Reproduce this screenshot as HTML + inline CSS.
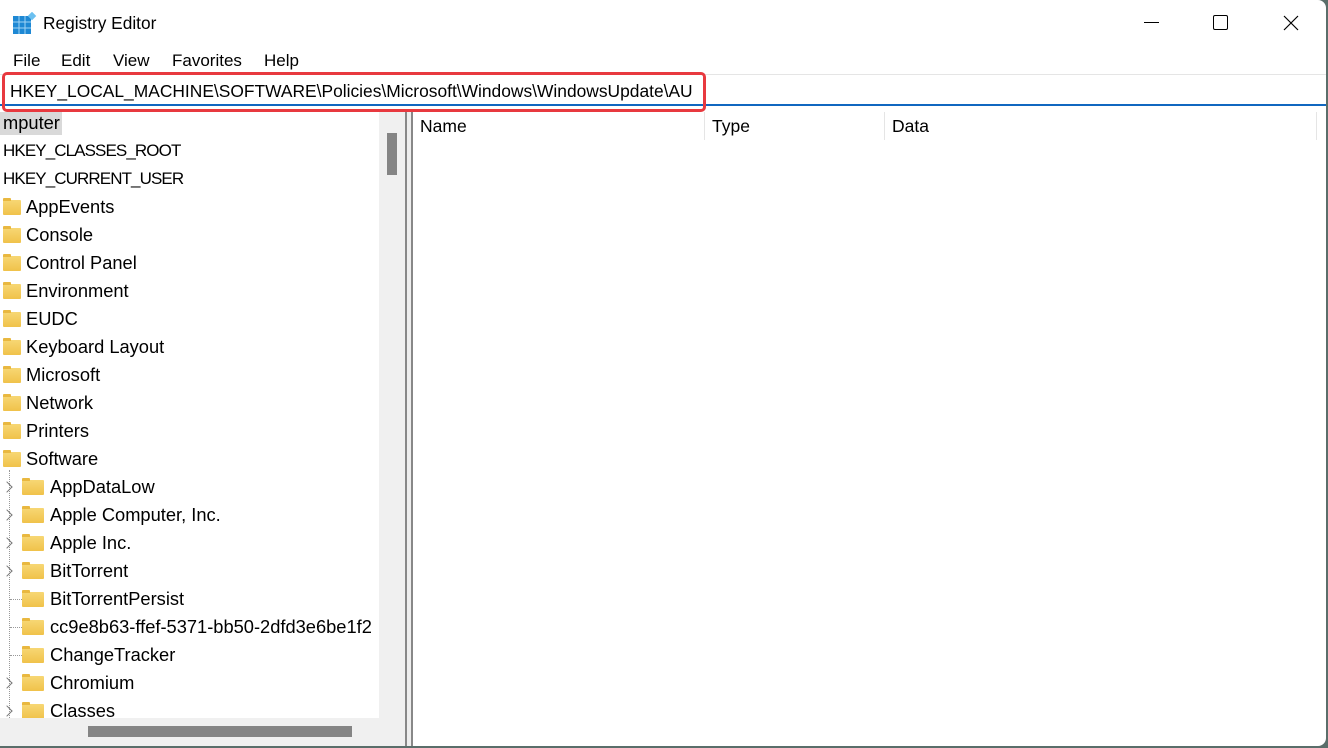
<!DOCTYPE html>
<html><head><meta charset="utf-8"><style>
*{margin:0;padding:0;box-sizing:border-box}
body{width:1328px;height:748px;overflow:hidden;background:#5a6e6a;font-family:"Liberation Sans",sans-serif;color:#000;position:relative}
#win{position:absolute;left:0;top:0;width:1326px;height:746px;background:#fff;border-radius:0 8px 8px 0;overflow:hidden}
.t{position:absolute;font-size:17px;white-space:nowrap;line-height:20px}
.tr{font-size:18.3px}
.f{position:absolute;width:18px;height:15px;background:linear-gradient(#f7d774,#f0c24a);border-radius:1px}
.f:before{content:"";position:absolute;left:0;top:-2px;width:8px;height:3px;background:#e9b840;border-radius:1px 1px 0 0}
.chev{position:absolute;width:8px;height:8px;border-right:1.5px solid #777;border-top:1.5px solid #777;transform:rotate(45deg)}
.dot{position:absolute;border-left:1px dotted #999}
.doth{position:absolute;border-top:1px dotted #999;width:12px}
</style></head><body>
<div id="win">
<svg style="position:absolute;left:13px;top:12px" width="24" height="22" viewBox="0 0 24 22">
<rect x="0" y="4" width="18" height="18" fill="#1e88d4"/>
<g stroke="#9fd3f5" stroke-width="1"><line x1="6" y1="4" x2="6" y2="22"/><line x1="12" y1="4" x2="12" y2="22"/><line x1="0" y1="10" x2="18" y2="10"/><line x1="0" y1="16" x2="18" y2="16"/></g>
<rect x="16" y="1" width="6" height="6" fill="#6cc0f0" transform="rotate(45 19 4)"/>
</svg>
<div class="t" style="left:43px;top:13px;font-size:17.3px">Registry Editor</div>
<div style="position:absolute;left:1144px;top:22px;width:15px;height:1px;background:#000"></div>
<div style="position:absolute;left:1213px;top:15px;width:15px;height:15px;border:1.3px solid #000;border-radius:2px"></div>
<svg style="position:absolute;left:1283px;top:15px" width="16" height="16"><path d="M1 1L15 15M15 1L1 15" stroke="#000" stroke-width="1.2"/></svg>
<div class="t" style="left:13px;top:51px">File</div>
<div class="t" style="left:61px;top:51px">Edit</div>
<div class="t" style="left:113px;top:51px">View</div>
<div class="t" style="left:172px;top:51px">Favorites</div>
<div class="t" style="left:264px;top:51px">Help</div>
<div style="position:absolute;left:0;top:74px;width:1326px;height:1px;background:#e5e5e5"></div>
<div style="position:absolute;left:0;top:104px;width:1326px;height:2px;background:#1067c0"></div>
<div class="t" style="left:10px;top:81px;font-size:17.4px">HKEY_LOCAL_MACHINE\SOFTWARE\Policies\Microsoft\Windows\WindowsUpdate\AU</div>
<div style="position:absolute;left:2px;top:72px;width:704px;height:40px;border:3px solid #e8393f;border-radius:5px"></div>
<div style="position:absolute;left:0;top:112px;width:405px;height:634px;background:#f0f0f0"></div>
<div style="position:absolute;left:0;top:112px;width:379px;height:606px;background:#fff"></div>
<div style="position:absolute;left:387px;top:133px;width:10px;height:42px;background:#858585"></div>
<div style="position:absolute;left:88px;top:726px;width:264px;height:11px;background:#858585"></div>
<div style="position:absolute;left:405px;top:112px;width:2px;height:634px;background:#888"></div>
<div style="position:absolute;left:407px;top:112px;width:4px;height:634px;background:#eee"></div>
<div style="position:absolute;left:411px;top:112px;width:2px;height:634px;background:#888"></div>
<div style="position:absolute;left:0;top:112px;width:62px;height:23px;background:#d9d9d9"></div>
<div class="t tr" style="left:3px;top:113px">mputer</div>
<div class="t" style="left:3px;top:141px;letter-spacing:-0.9px">HKEY_CLASSES_ROOT</div>
<div class="t" style="left:3px;top:169px;letter-spacing:-0.9px">HKEY_CURRENT_USER</div>

<div class="f" style="left:3px;top:200px"></div><div class="t tr" style="left:26px;top:197px">AppEvents</div>
<div class="f" style="left:3px;top:228px"></div><div class="t tr" style="left:26px;top:225px">Console</div>
<div class="f" style="left:3px;top:256px"></div><div class="t tr" style="left:26px;top:253px">Control Panel</div>
<div class="f" style="left:3px;top:284px"></div><div class="t tr" style="left:26px;top:281px">Environment</div>
<div class="f" style="left:3px;top:312px"></div><div class="t tr" style="left:26px;top:309px">EUDC</div>
<div class="f" style="left:3px;top:340px"></div><div class="t tr" style="left:26px;top:337px">Keyboard Layout</div>
<div class="f" style="left:3px;top:368px"></div><div class="t tr" style="left:26px;top:365px">Microsoft</div>
<div class="f" style="left:3px;top:396px"></div><div class="t tr" style="left:26px;top:393px">Network</div>
<div class="f" style="left:3px;top:424px"></div><div class="t tr" style="left:26px;top:421px">Printers</div>
<div class="f" style="left:3px;top:452px"></div><div class="t tr" style="left:26px;top:449px">Software</div>

<div class="dot" style="left:9px;top:470px;height:248px"></div>
<div class="chev" style="left:3px;top:483px"></div><div class="f" style="left:22px;top:480px;width:22px"></div><div class="t tr" style="left:50px;top:477px">AppDataLow</div>
<div class="chev" style="left:3px;top:511px"></div><div class="f" style="left:22px;top:508px;width:22px"></div><div class="t tr" style="left:50px;top:505px">Apple Computer, Inc.</div>
<div class="chev" style="left:3px;top:539px"></div><div class="f" style="left:22px;top:536px;width:22px"></div><div class="t tr" style="left:50px;top:533px">Apple Inc.</div>
<div class="chev" style="left:3px;top:567px"></div><div class="f" style="left:22px;top:564px;width:22px"></div><div class="t tr" style="left:50px;top:561px">BitTorrent</div>
<div class="doth" style="left:10px;top:599px"></div><div class="f" style="left:22px;top:592px;width:22px"></div><div class="t tr" style="left:50px;top:589px">BitTorrentPersist</div>
<div class="doth" style="left:10px;top:627px"></div><div class="f" style="left:22px;top:620px;width:22px"></div><div class="t tr" style="left:50px;top:617px">cc9e8b63-ffef-5371-bb50-2dfd3e6be1f2</div>
<div class="doth" style="left:10px;top:655px"></div><div class="f" style="left:22px;top:648px;width:22px"></div><div class="t tr" style="left:50px;top:645px">ChangeTracker</div>
<div class="chev" style="left:3px;top:679px"></div><div class="f" style="left:22px;top:676px;width:22px"></div><div class="t tr" style="left:50px;top:673px">Chromium</div>
<div class="chev" style="left:3px;top:707px"></div><div class="f" style="left:22px;top:704px;width:22px"></div><div class="t tr" style="left:50px;top:701px">Classes</div>
<div style="position:absolute;left:0;top:718px;width:379px;height:28px;background:#f0f0f0"></div>
<div style="position:absolute;left:88px;top:726px;width:264px;height:11px;background:#858585"></div>

<div class="t" style="left:420px;top:116px;font-size:17.5px">Name</div>
<div style="position:absolute;left:704px;top:112px;width:1px;height:28px;background:#e5e5e5"></div>
<div class="t" style="left:712px;top:116px;font-size:17.5px">Type</div>
<div style="position:absolute;left:884px;top:112px;width:1px;height:28px;background:#e5e5e5"></div>
<div class="t" style="left:892px;top:116px;font-size:17.5px">Data</div>
<div style="position:absolute;left:1316px;top:112px;width:1px;height:28px;background:#e5e5e5"></div>
</div>
</body></html>
